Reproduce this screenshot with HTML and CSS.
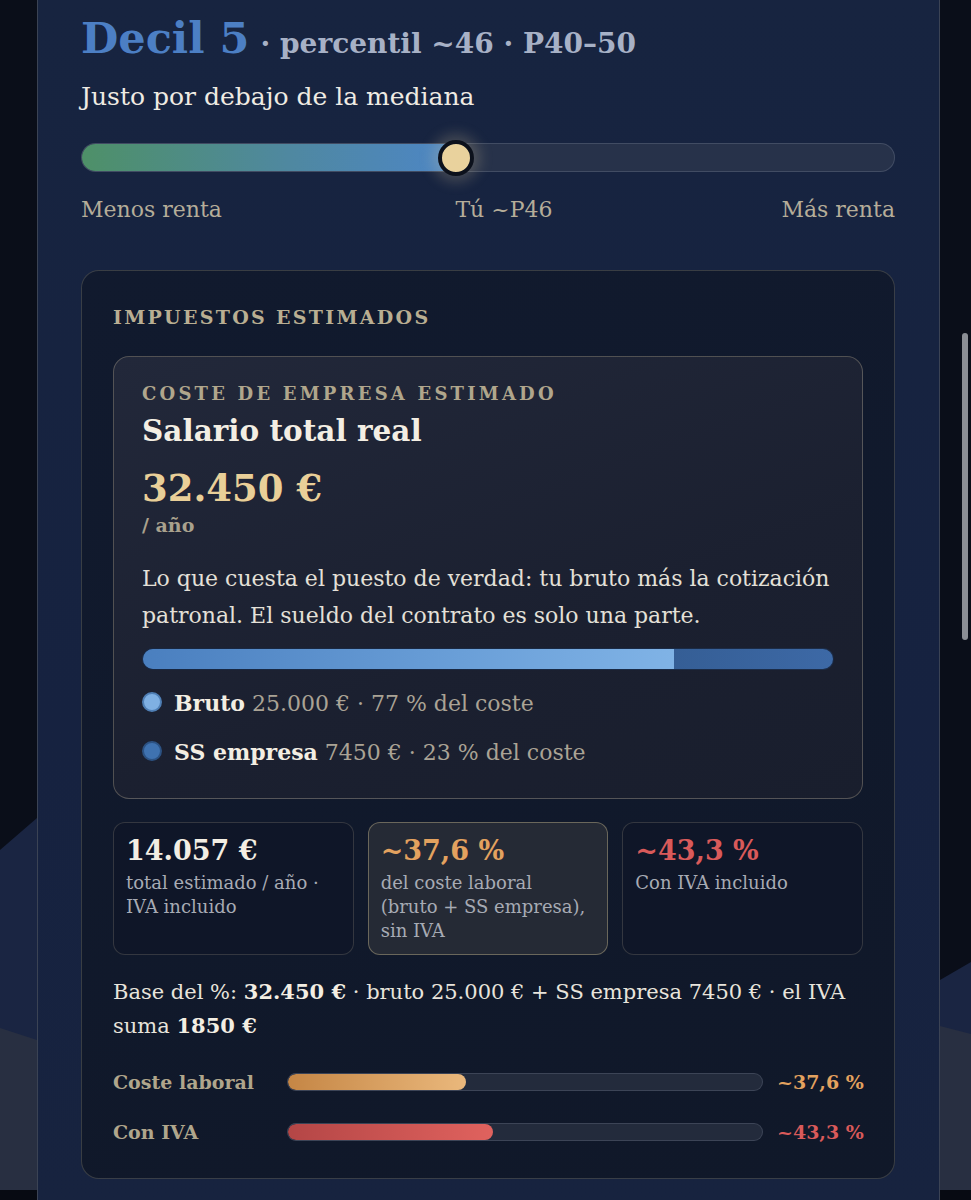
FILE: index.html
```html
<!DOCTYPE html>
<html lang="es">
<head>
    <meta charset="UTF-8">
    <meta name="viewport" content="width=device-width, initial-scale=1.0">
    <title>Decil 5 - Impuestos estimados</title>
    <link rel="stylesheet" href="styles.css">
</head>
<body>
    <svg class="backdrop" viewBox="0 0 971 1200" preserveAspectRatio="none" aria-hidden="true">
        <rect width="971" height="1200" fill="#0a0e19"/>
        <polygon points="0,850 37,818 37,1190 0,1190" fill="#1a2542"/>
        <polygon points="0,1028 37,1040 37,1190 0,1190" fill="#282f41"/>
        <polygon points="940,980 971,962 971,1190 940,1190" fill="#1a2542"/>
        <polygon points="940,1026 971,1034 971,1190 940,1190" fill="#282f41"/>
        <rect y="1190" width="971" height="10" fill="#070a12"/>
    </svg>

    <main class="panel">
        <h1 class="decil">
            <span class="decil-num">Decil 5</span>
            <span class="decil-meta">· percentil ~46 · P40–50</span>
        </h1>
        <p class="decil-sub">Justo por debajo de la mediana</p>

        <div class="range">
            <div class="range-fill" style="width: 46%"></div>
            <div class="range-thumb" style="left: 46%"></div>
        </div>
        <div class="range-labels">
            <span>Menos renta</span>
            <span class="range-you" style="left: 46%">Tú ~P46</span>
            <span>Más renta</span>
        </div>

        <section class="tax-card">
            <h2 class="tax-title">IMPUESTOS ESTIMADOS</h2>

            <div class="cost-card">
                <div class="cost-kicker">COSTE DE EMPRESA ESTIMADO</div>
                <div class="cost-title">Salario total real</div>
                <div class="cost-amount">32.450 €</div>
                <div class="cost-per">/ año</div>
                <p class="cost-text">Lo que cuesta el puesto de verdad: tu bruto más la cotización patronal. El sueldo del contrato es solo una parte.</p>

                <div class="split-bar">
                    <div class="split-gross" style="width: 77%"></div>
                </div>
                <ul class="legend">
                    <li><span class="dot dot-gross"></span><b>Bruto</b> 25.000 € · 77 % del coste</li>
                    <li><span class="dot dot-ss"></span><b>SS empresa</b> 7450 € · 23 % del coste</li>
                </ul>
            </div>

            <div class="stats">
                <div class="stat">
                    <div class="stat-value">14.057 €</div>
                    <div class="stat-desc">total estimado / año · IVA incluido</div>
                </div>
                <div class="stat stat-active">
                    <div class="stat-value orange">~37,6 %</div>
                    <div class="stat-desc">del coste laboral <span class="keep">(bruto + SS empresa),</span> sin IVA</div>
                </div>
                <div class="stat">
                    <div class="stat-value red">~43,3 %</div>
                    <div class="stat-desc">Con IVA incluido</div>
                </div>
            </div>

            <p class="base-text">Base del %: <b>32.450 €</b> · bruto 25.000 € + SS empresa 7450 € · el IVA suma <b>1850 €</b></p>

            <div class="rate-row">
                <span class="rate-label">Coste laboral</span>
                <div class="rate-track"><div class="rate-fill fill-orange" style="width: 37.6%"></div></div>
                <span class="rate-value orange">~37,6 %</span>
            </div>
            <div class="rate-row">
                <span class="rate-label">Con IVA</span>
                <div class="rate-track"><div class="rate-fill fill-red" style="width: 43.3%"></div></div>
                <span class="rate-value red">~43,3 %</span>
            </div>
        </section>
    </main>

    <div class="scrollbar"></div>
</body>
</html>
```

FILE: styles.css
```css
body {
    margin: 0;
    padding: 0 31px 0 37px;
    font-family: "DejaVu Serif", "Liberation Serif", serif;
    color: #e6e2da;
    background: #0a0e19;
    min-height: 1200px;
    overflow: hidden;
}
.backdrop {
    position: fixed;
    top: 0;
    left: 0;
    width: 100%;
    height: 100%;
    z-index: 0;
}
.panel {
    position: relative;
    z-index: 1;
    min-height: 1200px;
    padding: 12px 44px 0 43px;
    border-left: 1px solid #3b4354;
    border-right: 1px solid #3b4354;
    background: linear-gradient(180deg, #172440 0%, #162240 60%, #17233f 100%);
}

/* decil header */
.decil {
    margin: 0;
    line-height: 52px;
    font-weight: bold;
}
.decil-num {
    font-size: 43px;
    color: #4c7fc4;
}
.decil-meta {
    font-size: 28px;
    color: #a7b1c6;
}
.decil-sub {
    margin: 11px 0 0;
    font-size: 25px;
    line-height: 32px;
    color: #efebe3;
}

/* percentile range */
.range {
    position: relative;
    margin-top: 30px;
    height: 27px;
    border: 1px solid rgba(160, 170, 190, 0.22);
    border-radius: 15px;
    background: #27324a;
}
.range-fill {
    height: 100%;
    border-radius: 15px 0 0 15px;
    background: linear-gradient(90deg, #4e9068 0%, #4f88a0 55%, #4d86c6 100%);
}
.range-thumb {
    position: absolute;
    top: 50%;
    width: 28px;
    height: 28px;
    margin: -18px 0 0 -18px;
    border: 4px solid #0c111c;
    border-radius: 50%;
    background: #e9d29d;
    box-shadow: 0 0 14px 6px rgba(233, 210, 157, 0.22);
}
.range-labels {
    position: relative;
    display: flex;
    justify-content: space-between;
    margin-top: 24px;
    font-size: 22px;
    line-height: 28px;
    color: #b5ad99;
}
.range-you {
    position: absolute;
    top: 0;
}

/* tax card */
.tax-card {
    margin-top: 46px;
    padding: 34px 31px 34px;
    border: 1px solid rgba(190, 180, 150, 0.24);
    border-radius: 18px;
    background: linear-gradient(160deg, #111a2e 0%, #101829 100%);
}
.tax-title {
    margin: 0;
    font-size: 19px;
    line-height: 24px;
    letter-spacing: 2.3px;
    color: #b9ae92;
}
.cost-card {
    margin-top: 27px;
    padding: 26px 28px 30px;
    border: 1px solid rgba(200, 188, 160, 0.32);
    border-radius: 16px;
    background: linear-gradient(160deg, #22283a 0%, #1b2030 60%, #191e2d 100%);
}
.cost-kicker {
    font-size: 18px;
    line-height: 22px;
    font-weight: bold;
    letter-spacing: 3.2px;
    color: #b0a68c;
}
.cost-title {
    margin-top: 8px;
    font-size: 29.5px;
    line-height: 36px;
    font-weight: bold;
    color: #f3eee3;
}
.cost-amount {
    margin-top: 16px;
    font-size: 37px;
    line-height: 46px;
    font-weight: bold;
    color: #e9cf98;
}
.cost-per {
    margin-top: 2px;
    font-size: 19px;
    line-height: 24px;
    font-weight: bold;
    color: #a9a18d;
}
.cost-text {
    margin: 23px 0 0;
    font-size: 22px;
    line-height: 37px;
    color: #e4e0d8;
}
.split-bar {
    margin-top: 14px;
    height: 20px;
    border: 1px solid rgba(20, 30, 50, 0.8);
    border-radius: 11px;
    overflow: hidden;
    background: linear-gradient(90deg, #2b4c7d 0%, #2f5689 60%, #3d69a6 100%);
}
.split-gross {
    height: 100%;
    background: linear-gradient(90deg, #4a7fbf 0%, #6a9fd8 60%, #80b3e6 100%);
}
.legend {
    margin: 18px 0 0;
    padding: 0;
    list-style: none;
    font-size: 22px;
    line-height: 30px;
    color: #aaa395;
}
.legend li + li {
    margin-top: 18px;
}
.legend b {
    color: #f3eee3;
}
.dot {
    display: inline-block;
    width: 16px;
    height: 16px;
    margin-right: 12px;
    vertical-align: -1px;
    border-radius: 50%;
}
.dot-gross {
    background: #7fb0e3;
    border: 2px solid #4f7fb5;
}
.dot-ss {
    background: #3f72b0;
    border: 2px solid #2c5283;
}

/* stats */
.stats {
    display: grid;
    grid-template-columns: repeat(3, 1fr);
    gap: 14px;
    margin-top: 23px;
}
.stat {
    padding: 12px 12px 11px;
    border: 1px solid rgba(200, 190, 160, 0.2);
    border-radius: 12px;
    background: #0f1628;
}
.stat-active {
    background: #252a35;
    border-color: rgba(210, 195, 150, 0.4);
}
.stat-value {
    font-size: 27px;
    line-height: 32px;
    font-weight: bold;
    color: #f3eee3;
}
.stat-desc {
    margin-top: 4px;
    font-size: 18px;
    line-height: 24px;
    color: #a7abb4;
}
.keep {
    white-space: nowrap;
}
.orange,
.stat-value.orange {
    color: #e3a25f;
}
.red,
.stat-value.red {
    color: #d95a5a;
}

.base-text {
    margin: 20px 0 0;
    font-size: 21px;
    line-height: 33px;
    color: #e8e4dc;
}
.base-text b {
    color: #f3eee3;
}

/* rate bars */
.rate-row {
    display: grid;
    grid-template-columns: 160px 1fr 86px;
    gap: 14px;
    align-items: center;
    margin-top: 26px;
    line-height: 24px;
    font-size: 19px;
    font-weight: bold;
    white-space: nowrap;
}
.base-text + .rate-row {
    margin-top: 27px;
}
.rate-label {
    color: #b0a68c;
}
.rate-value {
    text-align: right;
}
.rate-track {
    height: 16px;
    border: 1px solid rgba(160, 170, 190, 0.2);
    border-radius: 10px;
    background: #232b3c;
    overflow: hidden;
}
.rate-fill {
    height: 100%;
    border-radius: 10px;
}
.fill-orange {
    background: linear-gradient(90deg, #c58645 0%, #eab87c 100%);
}
.fill-red {
    background: linear-gradient(90deg, #b44646 0%, #e0625e 100%);
}

.scrollbar {
    position: fixed;
    top: 333px;
    right: 3px;
    width: 6px;
    height: 307px;
    border-radius: 3px;
    background: #8b8e95;
    z-index: 2;
}
```
